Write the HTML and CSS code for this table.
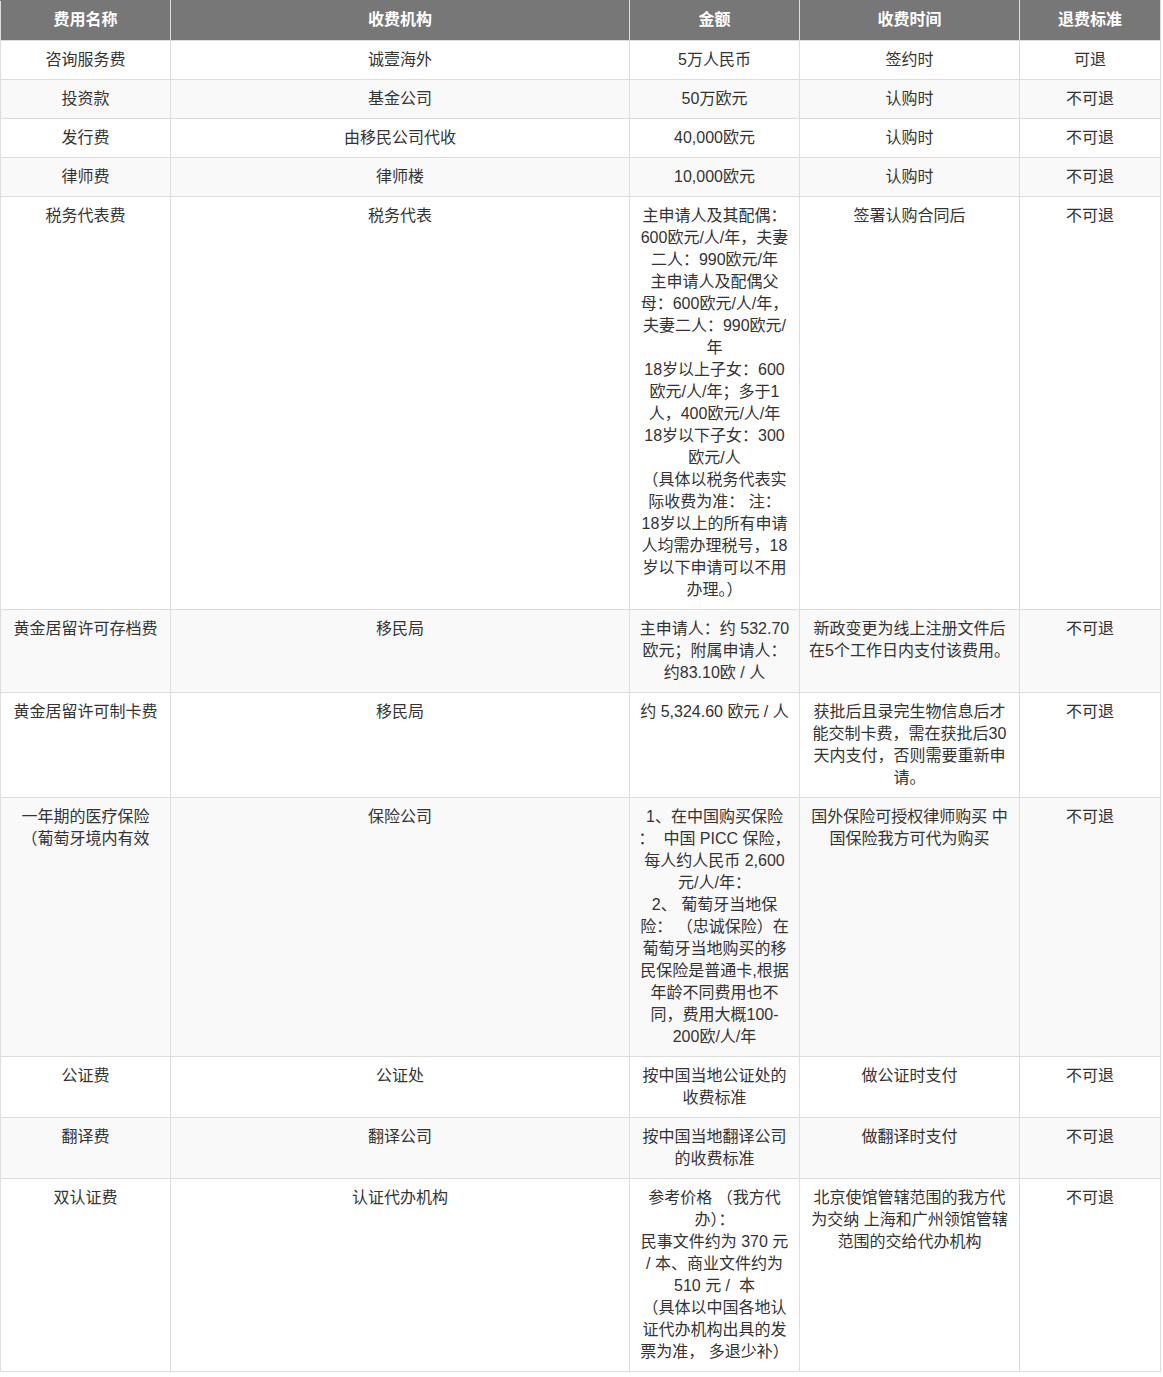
FILE: index.html
```html
<!DOCTYPE html>
<html lang="zh-CN">
<head>
<meta charset="utf-8">
<title>费用明细</title>
<link rel="stylesheet" href="styles.css">
</head>
<body>
<table class="fee-table">
  <colgroup>
    <col class="c-name">
    <col class="c-org">
    <col class="c-amount">
    <col class="c-time">
    <col class="c-refund">
  </colgroup>
  <thead>
    <tr>
      <th>费用名称</th>
      <th>收费机构</th>
      <th>金额</th>
      <th>收费时间</th>
      <th>退费标准</th>
    </tr>
  </thead>
  <tbody>
    <tr>
      <td>咨询服务费</td>
      <td>诚壹海外</td>
      <td>5万人民币</td>
      <td>签约时</td>
      <td>可退</td>
    </tr>
    <tr>
      <td>投资款</td>
      <td>基金公司</td>
      <td>50万欧元</td>
      <td>认购时</td>
      <td>不可退</td>
    </tr>
    <tr>
      <td>发行费</td>
      <td>由移民公司代收</td>
      <td>40,000欧元</td>
      <td>认购时</td>
      <td>不可退</td>
    </tr>
    <tr>
      <td>律师费</td>
      <td>律师楼</td>
      <td>10,000欧元</td>
      <td>认购时</td>
      <td>不可退</td>
    </tr>
    <tr>
      <td>税务代表费</td>
      <td>税务代表</td>
      <td>主申请人及其配偶：<br>600欧元/人/年，夫妻<br>二人：990欧元/年<br>主申请人及配偶父<br>母：600欧元/人/年，<br>夫妻二人：990欧元/<br>年<br>18岁以上子女：600<br>欧元/人/年；多于1<br>人，400欧元/人/年<br>18岁以下子女：300<br>欧元/人<br>（具体以税务代表实<br>际收费为准： 注：<br>18岁以上的所有申请<br>人均需办理税号，18<br>岁以下申请可以不用<br>办理。）</td>
      <td>签署认购合同后</td>
      <td>不可退</td>
    </tr>
    <tr>
      <td>黄金居留许可存档费</td>
      <td>移民局</td>
      <td>主申请人：约 532.70<br>欧元；附属申请人：<br>约83.10欧 / 人</td>
      <td>新政变更为线上注册文件后<br>在5个工作日内支付该费用。</td>
      <td>不可退</td>
    </tr>
    <tr>
      <td>黄金居留许可制卡费</td>
      <td>移民局</td>
      <td>约 5,324.60 欧元 / 人</td>
      <td>获批后且录完生物信息后才<br>能交制卡费，需在获批后30<br>天内支付，否则需要重新申<br>请。</td>
      <td>不可退</td>
    </tr>
    <tr>
      <td>一年期的医疗保险<br>（葡萄牙境内有效</td>
      <td>保险公司</td>
      <td>1、在中国购买保险<br>：&nbsp; 中国 PICC 保险，<br>每人约人民币 2,600<br>元/人/年：<br>2、 葡萄牙当地保<br>险： （忠诚保险）在<br>葡萄牙当地购买的移<br>民保险是普通卡,根据<br>年龄不同费用也不<br>同，费用大概100-<br>200欧/人/年</td>
      <td>国外保险可授权律师购买 中<br>国保险我方可代为购买</td>
      <td>不可退</td>
    </tr>
    <tr>
      <td>公证费</td>
      <td>公证处</td>
      <td>按中国当地公证处的<br>收费标准</td>
      <td>做公证时支付</td>
      <td>不可退</td>
    </tr>
    <tr>
      <td>翻译费</td>
      <td>翻译公司</td>
      <td>按中国当地翻译公司<br>的收费标准</td>
      <td>做翻译时支付</td>
      <td>不可退</td>
    </tr>
    <tr>
      <td>双认证费</td>
      <td>认证代办机构</td>
      <td>参考价格 （我方代<br>办）：<br>民事文件约为 370 元<br>/ 本、商业文件约为<br>510 元 /&nbsp; 本<br>（具体以中国各地认<br>证代办机构出具的发<br>票为准， 多退少补）</td>
      <td>北京使馆管辖范围的我方代<br>为交纳 上海和广州领馆管辖<br>范围的交给代办机构</td>
      <td>不可退</td>
    </tr>
  </tbody>
</table>
</body>
</html>
```

FILE: styles.css
```css
html, body {
  margin: 0;
  padding: 0;
  background: #fff;
}

body {
  font-family: "Liberation Sans", "Noto Sans CJK SC", sans-serif;
  font-size: 16px;
  color: #333;
}

.fee-table {
  border-collapse: collapse;
  table-layout: fixed;
  width: 1160px;
}

.c-name { width: 170px; }
.c-org { width: 459px; }
.c-amount { width: 170px; }
.c-time { width: 220px; }
.c-refund { width: 141px; }

.fee-table th,
.fee-table td {
  padding: 8px 8px;
  line-height: 22px;
  text-align: center;
  vertical-align: top;
  border: 1px solid #ddd;
  white-space: normal;
}

.fee-table th {
  padding-bottom: 9px;
  background: #777;
  color: #fff;
  font-weight: bold;
  border-top-color: #777;
}

.fee-table tbody tr:nth-child(even) td {
  background: #f9f9f9;
}
```
